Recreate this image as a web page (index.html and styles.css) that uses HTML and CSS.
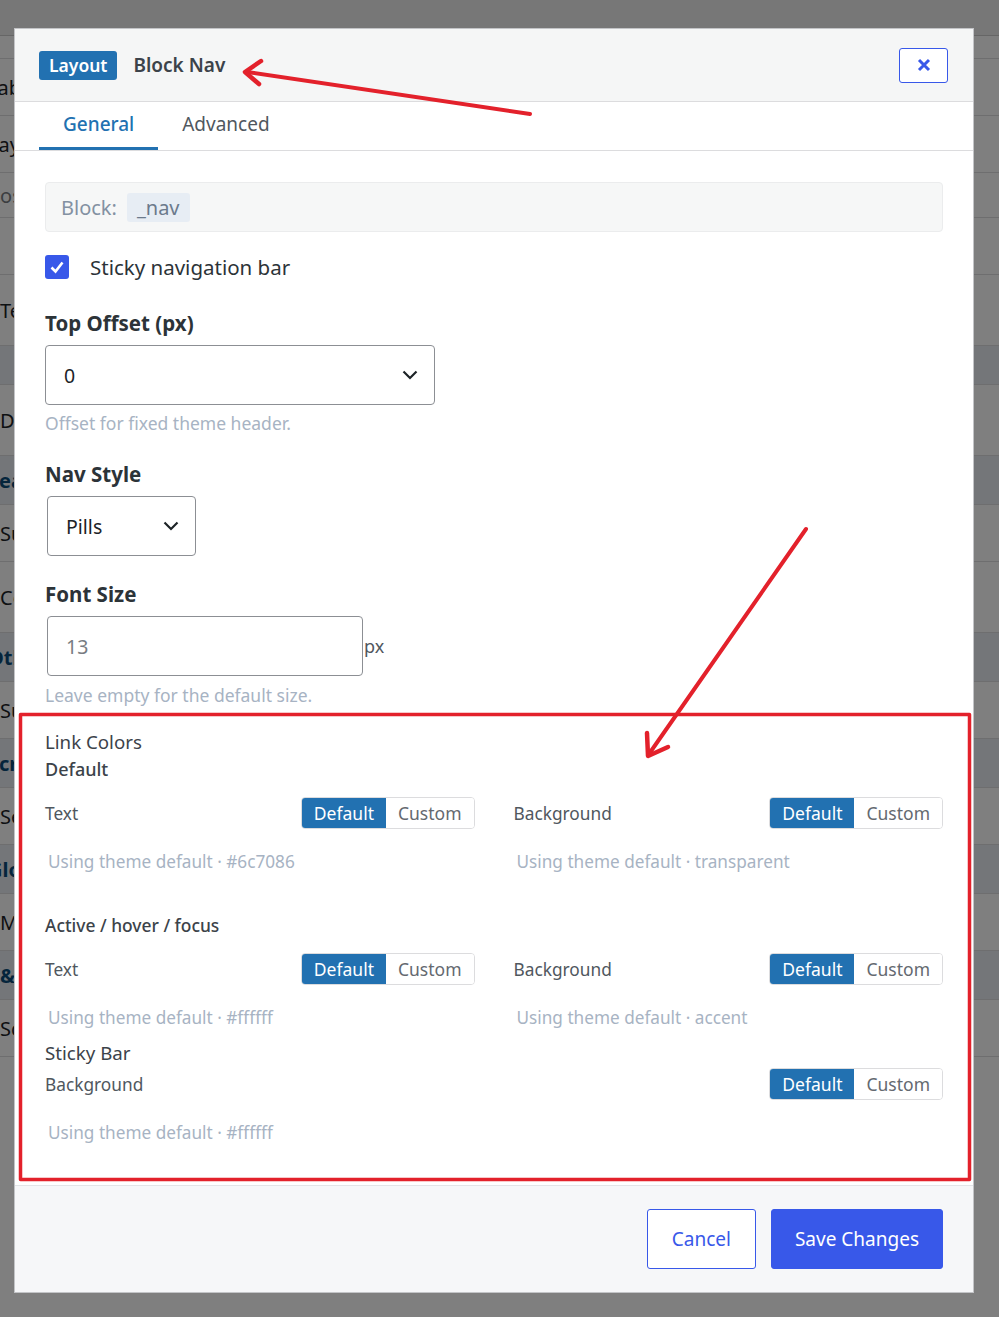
FILE: index.html
```html
<!DOCTYPE html>
<html lang="en">

<head>
    <meta charset="UTF-8">
    <title>Block Nav - Layout</title>
    <link rel="stylesheet" href="styles.css">
</head>

<body>
    <!-- settings page behind the dialog -->
    <div class="page">
        <div class="page-top"></div>
        <div class="page-row short"></div>
        <div class="page-row"><span class="cut">Table</span></div>
        <div class="page-row"><span class="cut">Layers</span></div>
        <div class="page-row small"><span class="cut muted">Posts</span></div>
        <div class="page-row"></div>
        <div class="page-row tall"><span>Text</span></div>
        <div class="page-row band"></div>
        <div class="page-row tall"><span>Display</span></div>
        <div class="page-row band head"><span class="cut">Features</span></div>
        <div class="page-row"><span>Sub</span></div>
        <div class="page-row tall"><span>Colors</span></div>
        <div class="page-row band head"><span class="cut">Other</span></div>
        <div class="page-row"><span>Sub</span></div>
        <div class="page-row band head"><span class="cut">Scrolling</span></div>
        <div class="page-row"><span>Sections</span></div>
        <div class="page-row band head"><span class="cut">Global</span></div>
        <div class="page-row"><span>Menu</span></div>
        <div class="page-row band head"><span>&amp; more</span></div>
        <div class="page-row"><span>Scripts</span></div>
    </div>
    <div class="backdrop"></div>

    <div class="modal">
        <header class="modal-head">
            <span class="badge">Layout</span>
            <span class="modal-title">Block Nav</span>
            <button class="close-btn" aria-label="Close">
                <svg width="14" height="14" viewBox="0 0 14 14">
                    <path d="M2 2 L12 12 M12 2 L2 12" stroke="#3858e9" stroke-width="3" fill="none" />
                </svg>
            </button>
        </header>

        <nav class="tabs">
            <a class="tab active">General</a>
            <a class="tab">Advanced</a>
        </nav>

        <div class="modal-body">
            <div class="block-ref">Block: <code>_nav</code></div>

            <label class="check-row">
                <span class="check">
                    <svg width="18" height="18" viewBox="0 0 18 18">
                        <path d="M3.5 9.5 L7.5 13.5 L14.5 4.5" stroke="#fff" stroke-width="2.6" fill="none" />
                    </svg>
                </span>
                Sticky navigation bar
            </label>

            <div class="field">
                <div class="field-label">Top Offset (px)</div>
                <div class="select select-wide">
                    <span>0</span>
                    <svg class="chevron" width="16" height="10" viewBox="0 0 16 10">
                        <path d="M1.5 1.5 L8 8 L14.5 1.5" stroke="#1d2327" stroke-width="2.2" fill="none" />
                    </svg>
                </div>
                <p class="help">Offset for fixed theme header.</p>
            </div>

            <div class="field">
                <div class="field-label">Nav Style</div>
                <div class="select select-small">
                    <span>Pills</span>
                    <svg class="chevron" width="16" height="10" viewBox="0 0 16 10">
                        <path d="M1.5 1.5 L8 8 L14.5 1.5" stroke="#1d2327" stroke-width="2.2" fill="none" />
                    </svg>
                </div>
            </div>

            <div class="field last">
                <div class="field-label">Font Size</div>
                <div class="input-unit">
                    <div class="text-input">13</div>
                    <span class="unit">px</span>
                </div>
                <p class="help">Leave empty for the default size.</p>
            </div>

            <section class="colors">
                <div class="group-title">Link Colors</div>
                <div class="sub-title">Default</div>
                <div class="color-grid">
                    <div class="color-field">
                        <div class="color-row">
                            <span class="color-label">Text</span>
                            <div class="seg"><span class="seg-btn on">Default</span><span class="seg-btn">Custom</span></div>
                        </div>
                        <p class="hint">Using theme default · #6c7086</p>
                    </div>
                    <div class="color-field">
                        <div class="color-row">
                            <span class="color-label">Background</span>
                            <div class="seg"><span class="seg-btn on">Default</span><span class="seg-btn">Custom</span></div>
                        </div>
                        <p class="hint">Using theme default · transparent</p>
                    </div>
                </div>

                <div class="sub-title state">Active / hover / focus</div>
                <div class="color-grid">
                    <div class="color-field">
                        <div class="color-row">
                            <span class="color-label">Text</span>
                            <div class="seg"><span class="seg-btn on">Default</span><span class="seg-btn">Custom</span></div>
                        </div>
                        <p class="hint">Using theme default · #ffffff</p>
                    </div>
                    <div class="color-field">
                        <div class="color-row">
                            <span class="color-label">Background</span>
                            <div class="seg"><span class="seg-btn on">Default</span><span class="seg-btn">Custom</span></div>
                        </div>
                        <p class="hint">Using theme default · accent</p>
                    </div>
                </div>

                <div class="group-title sticky">Sticky Bar</div>
                <div class="color-field">
                    <div class="color-row full">
                        <span class="color-label">Background</span>
                        <div class="seg"><span class="seg-btn on">Default</span><span class="seg-btn">Custom</span></div>
                    </div>
                    <p class="hint">Using theme default · #ffffff</p>
                </div>
            </section>
        </div>

        <footer class="modal-foot">
            <button class="btn btn-outline">Cancel</button>
            <button class="btn btn-primary">Save Changes</button>
        </footer>
    </div>

    <!-- review markup drawn on top -->
    <svg class="markup" width="999" height="1317" viewBox="0 0 999 1317">
        <g stroke="#e3212b" fill="none" stroke-linecap="round" stroke-linejoin="round">
            <path d="M530 114 L247 72" stroke-width="4" />
            <path d="M261 61 L245 72 L259 84" stroke-width="4.5" />
            <path d="M806 529 L649 754" stroke-width="4" />
            <path d="M647 733 L648 756 L668 747" stroke-width="4.5" />
            <rect x="20.5" y="714.5" width="949" height="465" stroke-width="3.5" />
        </g>
    </svg>
</body>

</html>
```

FILE: styles.css
```css
body {
    margin: 0;
    font-family: 'Noto Sans', 'Open Sans', sans-serif;
    color: #2c3338;
    background-color: #fff;
    width: 999px;
    height: 1317px;
    overflow: hidden;
}

/* page underneath */
.page {
    font-size: 20px;
    color: #1d2327;
}

.page-top {
    height: 35px;
    background-color: #eee;
    border-bottom: 1px solid #ccc;
}

.page-row {
    height: 56px;
    display: flex;
    align-items: center;
    border-bottom: 1px solid #dcdcde;
    white-space: nowrap;
}

/* first column label, only its edge shows beside the dialog */
.page-row span {
    display: block;
    width: 14px;
    overflow: hidden;
}

.page-row.short {
    height: 22px;
}

.page-row.small {
    height: 44px;
}

.page-row.tall {
    height: 70px;
}

.page-row.band {
    height: 38px;
    background-color: #e8edf2;
}

.page-row.head {
    height: 48px;
    color: #0a4b78;
    font-weight: 700;
}

.page-row .cut {
    margin-left: -12px;
    width: 26px;
}

.page-row .muted {
    color: #787c82;
}

.backdrop {
    position: fixed;
    inset: 0;
    background-color: rgba(0, 0, 0, 0.5);
}

/* dialog */
.modal {
    position: absolute;
    top: 28px;
    left: 14px;
    width: 958px;
    height: 1263px;
    background-color: #fff;
    border: 1px solid #c3c4c7;
    display: flex;
    flex-direction: column;
}

.modal-head {
    height: 72px;
    flex: none;
    display: flex;
    align-items: center;
    padding: 0 25px 0 24px;
    background-color: #f5f6f6;
    border-bottom: 1px solid #dcdcde;
}

.badge {
    background-color: #2271b1;
    color: #fff;
    font-size: 17.5px;
    font-weight: 600;
    line-height: 29px;
    padding: 0 10px;
    border-radius: 3px;
    margin-right: 16px;
}

.modal-title {
    font-size: 19px;
    font-weight: 600;
    color: #3c434a;
}

.close-btn {
    margin-left: auto;
    width: 49px;
    height: 35px;
    border: 1px solid #3858e9;
    border-radius: 3px;
    background: #fff;
    display: flex;
    align-items: center;
    justify-content: center;
    padding: 0;
}

.tabs {
    height: 48px;
    flex: none;
    display: flex;
    padding-left: 24px;
    border-bottom: 1px solid #dcdcde;
}

.tab {
    padding: 0 24px;
    font-size: 19px;
    color: #50575e;
    line-height: 45px;
    border-bottom: 3px solid transparent;
}

.tab.active {
    color: #2271b1;
    font-weight: 500;
    border-bottom-color: #2271b1;
}

.modal-body {
    flex: 1;
    padding: 31px 30px 0 30px;
}

.block-ref {
    height: 48px;
    display: flex;
    align-items: center;
    padding: 0 15px;
    background-color: #f6f7f7;
    border: 1px solid #ebeced;
    border-radius: 4px;
    font-size: 20px;
    color: #8391a2;
}

.block-ref code {
    font-family: inherit;
    margin-left: 10px;
    padding: 0 10px;
    line-height: 29px;
    background-color: #e7edf4;
    border-radius: 3px;
    color: #6b7a8c;
}

.check-row {
    display: flex;
    align-items: center;
    margin-top: 23px;
    height: 24px;
    font-size: 20.5px;
    color: #2c3338;
}

.check {
    width: 24px;
    height: 24px;
    border-radius: 3px;
    background-color: #3858e9;
    display: flex;
    align-items: center;
    justify-content: center;
    margin-right: 21px;
}

.field {
    margin-top: 32px;
}

.field + .field {
    margin-top: 28px;
}

.field.last {
    margin-top: 26px;
}

.field-label {
    font-size: 20.5px;
    font-weight: 700;
    line-height: 24px;
    color: #2c3338;
    margin-bottom: 10px;
}

.select {
    height: 58px;
    display: flex;
    align-items: center;
    justify-content: space-between;
    padding: 0 16px 0 18px;
    border: 1px solid #8c8f94;
    border-radius: 4px;
    font-size: 19.5px;
    color: #1d2327;
}

.select-wide {
    width: 354px;
}

.select-small {
    width: 113px;
    margin-left: 2px;
}

.input-unit {
    display: flex;
    align-items: center;
    margin-left: 2px;
}

.text-input {
    width: 278px;
    height: 58px;
    display: flex;
    align-items: center;
    padding: 0 18px;
    border: 1px solid #8c8f94;
    border-radius: 4px;
    font-size: 19.5px;
    color: #787c82;
}

.unit {
    font-size: 18px;
    color: #50575e;
    margin-left: 1px;
}

.help {
    margin: 7px 0 0;
    font-size: 17.5px;
    line-height: 22px;
    color: #a7b3c3;
}

.field.last .help {
    margin-top: 8px;
}

/* link colour block */
.colors {
    margin-top: 24px;
}

.group-title {
    font-size: 18.7px;
    line-height: 24px;
    color: #3c434a;
}

.group-title.sticky {
    margin-top: 12px;
}

.sub-title {
    font-size: 18px;
    font-weight: 500;
    line-height: 22px;
    color: #3c434a;
    margin-top: 4px;
}

.sub-title.state {
    font-size: 17.4px;
    margin-top: 41px;
}

.color-grid {
    display: grid;
    grid-template-columns: 1fr 1fr;
    column-gap: 39px;
}

.color-row {
    display: flex;
    align-items: center;
    justify-content: space-between;
    margin-top: 17px;
}

.color-row.full {
    margin-top: 3px;
}

.color-label {
    font-size: 17.3px;
    color: #50575e;
}

.seg {
    display: flex;
    height: 32px;
    border: 1px solid #dcdcde;
    border-radius: 4px;
    overflow: hidden;
    box-sizing: border-box;
}

.seg-btn {
    display: flex;
    align-items: center;
    padding: 0 12px;
    font-size: 17.5px;
    color: #646970;
    background-color: #fff;
}

.seg-btn.on {
    background-color: #2271b1;
    color: #fff;
}

.hint {
    margin: 22px 0 0 3px;
    font-size: 17.2px;
    line-height: 22px;
    color: #a7b3c3;
}

.modal-foot {
    height: 106px;
    flex: none;
    display: flex;
    align-items: center;
    justify-content: flex-end;
    gap: 15px;
    padding: 0 30px;
    background-color: #f6f7f9;
    border-top: 1px solid #e2e4e7;
}

.btn {
    height: 60px;
    font-family: inherit;
    font-size: 19px;
    border-radius: 3px;
    padding: 0 24px;
}

.btn-outline {
    background-color: #fff;
    border: 1px solid #3858e9;
    color: #3858e9;
}

.btn-primary {
    padding: 0 23px;
    background-color: #3858e9;
    border: 1px solid #3858e9;
    color: #fff;
}

.markup {
    position: absolute;
    top: 0;
    left: 0;
    pointer-events: none;
}
```
